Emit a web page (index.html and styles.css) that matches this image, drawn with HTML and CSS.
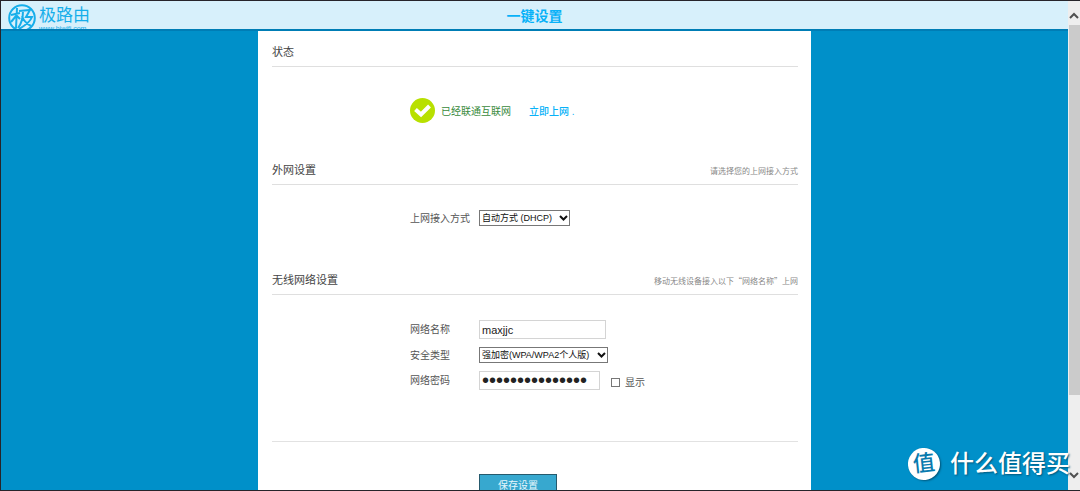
FILE: index.html
```html
<!DOCTYPE html>
<html lang="zh-CN">
<head>
<meta charset="utf-8">
<title>一键设置</title>
<link rel="stylesheet" href="styles.css">
</head>
<body>
<div class="window">
  <div class="view">
    <header class="topbar">
      <a class="brand" href="#">
        <svg class="brand-mark" viewBox="0 0 28 28" aria-hidden="true">
          <circle cx="14" cy="14" r="12.8"/>
          <path d="M3 11l9-2M9 4L8 24M8 12L3 18M9 12l3 3M11 7l11-1-4 7h6c-2 5-6 8-13 12M15 7c0 7-1 12-5 17M14 12c2 6 5 8 9 10"/>
        </svg>
        <span class="brand-text">
          <span class="brand-name">极路由</span>
          <span class="brand-url">www.hiwifi.com</span>
        </span>
      </a>
      <h1 class="page-title">一键设置</h1>
    </header>
    <main class="panel">
      <form>
        <section>
          <div class="section-head"><h2>状态</h2></div>
          <div class="status">
            <svg class="status-icon" viewBox="0 0 25 25" aria-hidden="true">
              <circle cx="12.5" cy="12.5" r="12.5"/>
              <path d="M5.500 11.500l5.500 5 8.500-8.500"/>
            </svg>
            <span class="status-text">已经联通互联网</span>
            <a class="status-link" href="#">立即上网 .</a>
          </div>
        </section>
        <section>
          <div class="section-head"><h2>外网设置</h2><p>请选择您的上网接入方式</p></div>
          <div class="fields fields-wan">
            <div class="row">
              <label for="wan">上网接入方式</label>
              <span class="select select-wan">
                <select id="wan"><option>自动方式 (DHCP)</option></select>
                <svg viewBox="0 0 9 6" aria-hidden="true"><path d="M1 1l3.500 3.500L8 1"/></svg>
              </span>
            </div>
          </div>
        </section>
        <section>
          <div class="section-head"><h2>无线网络设置</h2><p>移动无线设备接入以下“网络名称”上网</p></div>
          <div class="fields fields-wifi">
            <div class="row">
              <label for="ssid">网络名称</label>
              <input class="text ssid" id="ssid" type="text" value="maxjjc">
            </div>
            <div class="row">
              <label for="security">安全类型</label>
              <span class="select select-security">
                <select id="security"><option>强加密(WPA/WPA2个人版)</option></select>
                <svg viewBox="0 0 9 6" aria-hidden="true"><path d="M1 1l3.500 3.500L8 1"/></svg>
              </span>
            </div>
            <div class="row">
              <label for="password">网络密码</label>
              <input class="text password" id="password" type="password" value="123456789012345">
              <input class="check" id="show" type="checkbox">
              <label class="check-label" for="show">显示</label>
            </div>
          </div>
        </section>
        <div class="actions"><button class="save" type="submit">保存设置</button></div>
      </form>
    </main>
  </div>
  <div class="scrollbar" aria-hidden="true">
    <svg viewBox="0 0 12 8"><path d="M2 6l4-4 4 4"/></svg>
    <div class="track"><div class="thumb"></div></div>
    <svg viewBox="0 0 12 8"><path d="M2 2l4 4 4-4"/></svg>
  </div>
</div>
<div class="watermark">
  <span class="watermark-mark">值</span>
  <span>什么值得买</span>
</div>
</body>
</html>
```
FILE: styles.css
```css
* { box-sizing: border-box; }

body {
  margin: 0;
  color: #555;
  font: 10px/15px "Liberation Sans", "Noto Sans CJK SC", sans-serif;
}

h1, h2, p { margin: 0; font-weight: normal; }
a { text-decoration: none; }
input, select, button { margin: 0; font-family: inherit; }

.window {
  display: flex;
  height: 100vh;
  border: 1px solid #26242a;
  border-right: 0;
  background: #0090c9;
  overflow: hidden;
}

.view { flex: 1; overflow: hidden; }

.topbar {
  display: grid;
  grid-template-columns: 1fr auto 1fr;
  height: 30px;
  background: #d7f0fb;
  border-bottom: 2px solid #007db5;
  overflow: hidden;
}

.brand {
  display: flex;
  gap: 3px;
  padding: 3px 0 0 7px;
  color: #16aeea;
}

.brand-mark { flex: none; width: 28px; height: 28px; }
.brand-mark circle, .brand-mark path { fill: none; stroke: #16aeea; stroke-width: 2; }

.brand-text { display: flex; flex-direction: column; padding-top: 2px; }
.brand-name { font-size: 17px; line-height: 20px; }
.brand-url { font-size: 7px; line-height: 6px; }

.page-title {
  color: #08b2f8;
  font-size: 14px;
  font-weight: bold;
  line-height: 30px;
}

.panel {
  max-width: 553px;
  margin: 0 auto;
  padding: 0 13px 20px 14px;
  background: #fff;
}

.section-head {
  display: flex;
  justify-content: space-between;
  align-items: center;
  height: 36px;
  padding-top: 8px;
  border-bottom: 1px solid #dfdfdf;
}

.section-head h2 { color: #444; font-size: 11px; }
.section-head p {
  color: #888;
  font-family: "Noto Sans CJK SC", sans-serif;
  font-size: 8px;
}

.status {
  display: flex;
  align-items: center;
  padding: 31px 0 26px 138px;
}

.status-icon { width: 25px; height: 25px; margin-right: 6px; }
.status-icon circle { fill: #b8e000; }
.status-icon path { fill: none; stroke: #fff; stroke-width: 4; }
.status-text { margin-right: 18px; padding-top: 2px; color: #388a3c; }
.status-link { padding-top: 2px; color: #08b2f8; font-weight: 500; }

.fields { display: flex; flex-direction: column; gap: 8px; padding-left: 138px; }
.fields-wan { padding-top: 25px; padding-bottom: 33px; }
.fields-wifi { padding-top: 25px; padding-bottom: 51px; }

.row { display: flex; align-items: center; }
.row label { width: 69px; }

.select { position: relative; display: flex; }
.select select {
  width: 100%;
  height: 16px;
  padding: 0 2px;
  appearance: none;
  border: 1px solid #777;
  border-radius: 0;
  background: #fff;
  color: #111;
  font-size: 9px;
}
.select svg {
  position: absolute;
  top: 5px;
  right: 2px;
  width: 9px;
  height: 6px;
  pointer-events: none;
}
.select path { fill: none; stroke: #111; stroke-width: 2; }
.select-wan { width: 91px; }
.select-security { width: 129px; }

.text {
  height: 19px;
  padding: 0 2px;
  border: 1px solid #d4d4d4;
  border-radius: 0;
  background: #fff;
  color: #222;
}
.ssid { width: 127px; font-size: 11px; }
.password { width: 121px; font-size: 20px; }

.check {
  width: 9px;
  height: 9px;
  margin: 4px 5px 0 11px;
  appearance: none;
  border: 1px solid #777;
  background: #fff;
}
.check:checked { background: #37a8cf; }
.row .check-label { width: auto; padding-top: 4px; }

.actions { padding: 32px 0 0 207px; border-top: 1px solid #e2e2e2; }
.save {
  width: 78px;
  height: 22px;
  padding: 0;
  border: 1px solid #265a6d;
  border-radius: 0;
  background: #37a8cf;
  color: #e6f6fc;
  font-size: 10px;
  line-height: 15px;
}

.scrollbar {
  display: flex;
  flex-direction: column;
  flex: none;
  width: 12px;
  padding: 11px 0;
  background: #eee;
}
.scrollbar svg { width: 12px; height: 8px; }
.scrollbar path { fill: none; stroke: #505050; stroke-width: 2; }
.track { flex: 1; padding: 5px 0 0 1px; }
.thumb { height: 83%; background: #cbcbcb; }

.watermark {
  position: absolute;
  right: 10px;
  bottom: 11px;
  display: flex;
  align-items: center;
  gap: 10px;
  color: #fff;
  font-size: 24px;
  font-weight: 500;
  line-height: 32px;
  text-shadow: 1px 1px 2px #00567a;
}
.watermark-mark {
  width: 32px;
  height: 32px;
  border-radius: 50%;
  background: #fff;
  box-shadow: 1px 1px 2px #00567a;
  color: #087aae;
  font-size: 22px;
  font-weight: 500;
  line-height: 31px;
  text-align: center;
  text-shadow: none;
  transform: rotate(-6deg);
}
```
